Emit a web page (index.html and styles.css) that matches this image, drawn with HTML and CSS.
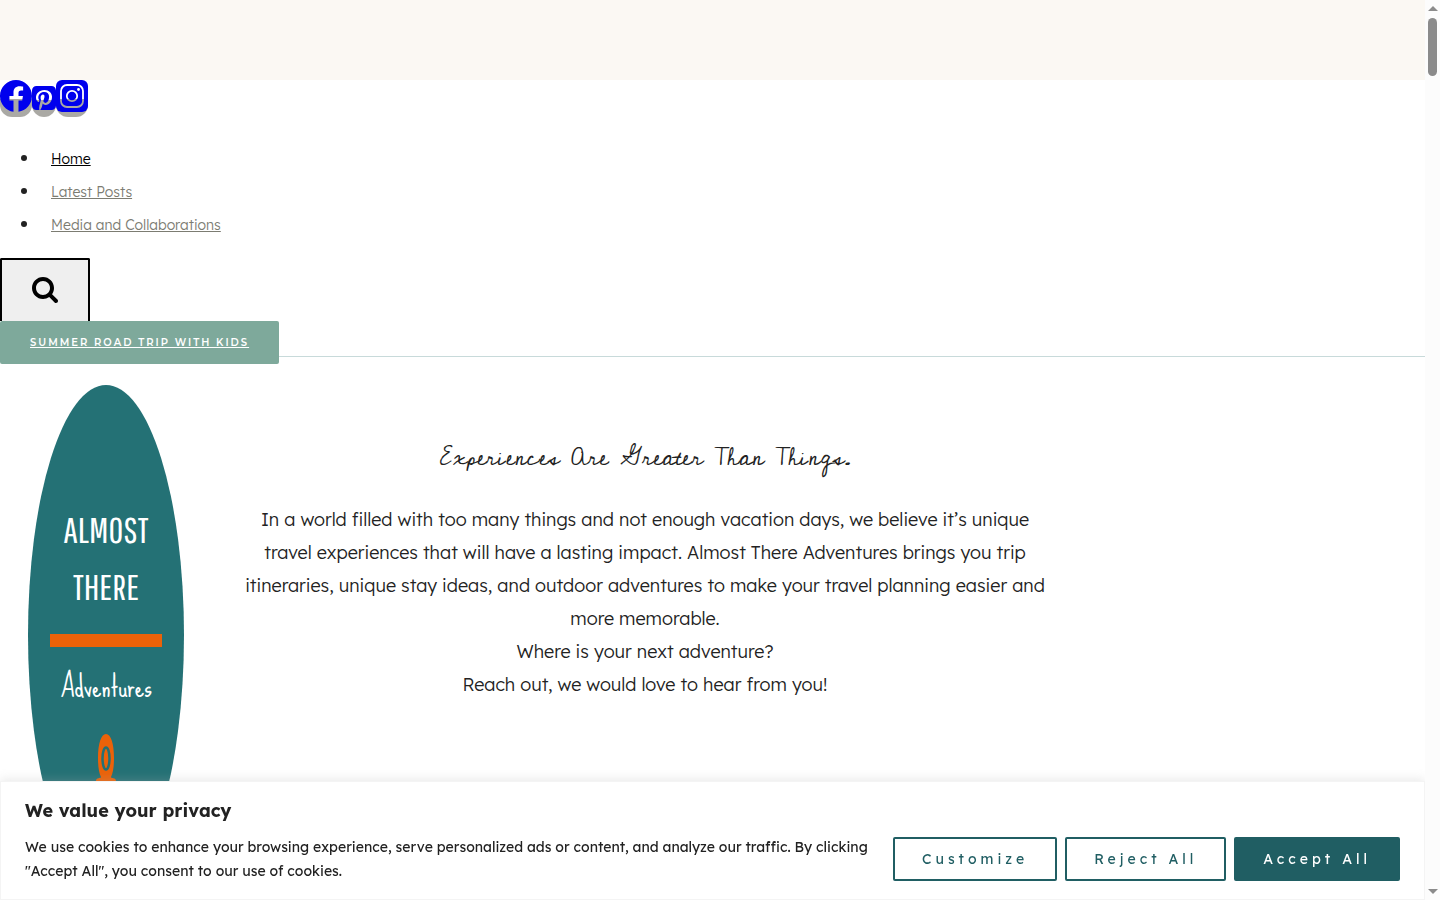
FILE: index.html
```html
<!DOCTYPE html>
<html lang="en">
<head>
    <meta charset="UTF-8">
    <meta name="viewport" content="width=device-width, initial-scale=1.0">
    <title>Almost There Adventures</title>
    <link rel="stylesheet" href="styles.css">
</head>
<body>
    <div class="page">
        <div class="top-band"></div>

        <header class="site-header">
            <div class="social">
                <a href="#" aria-label="Facebook">
                    <svg width="32" height="32" viewBox="0 0 32 32"><path d="M31.997 15.999c0-8.836-7.163-15.999-15.999-15.999s-15.999 7.163-15.999 15.999c0 7.985 5.851 14.604 13.499 15.804v-11.18h-4.062v-4.625h4.062v-3.525c0-4.010 2.389-6.225 6.043-6.225 1.75 0 3.581 0.313 3.581 0.313v3.937h-2.017c-1.987 0-2.607 1.233-2.607 2.498v3.001h4.437l-0.709 4.625h-3.728v11.18c7.649-1.2 13.499-7.819 13.499-15.804z"/></svg>
                </a>
                <a href="#" aria-label="Pinterest">
                    <svg width="24" height="28" viewBox="0 0 24 28"><path d="M19.5 2c2.484 0 4.5 2.016 4.5 4.5v15c0 2.484-2.016 4.5-4.5 4.5h-11.328c0.516-0.734 1.359-2 1.687-3.281 0 0 0.141-0.531 0.828-3.266 0.422 0.797 1.625 1.484 2.906 1.484 3.813 0 6.406-3.484 6.406-8.141 0-3.516-2.984-6.797-7.516-6.797-5.641 0-8.484 4.047-8.484 7.422 0 2.031 0.781 3.844 2.438 4.531 0.266 0.109 0.516 0 0.594-0.297 0.047-0.203 0.172-0.734 0.234-0.953 0.078-0.297 0.047-0.406-0.172-0.656-0.469-0.578-0.781-1.297-0.781-2.344 0-3 2.25-5.672 5.844-5.672 3.187 0 4.937 1.937 4.937 4.547 0 3.422-1.516 6.312-3.766 6.312-1.234 0-2.172-1.031-1.875-2.297 0.359-1.5 1.047-3.125 1.047-4.203 0-0.969-0.516-1.781-1.594-1.781-1.266 0-2.281 1.313-2.281 3.063 0 0 0 1.125 0.375 1.891-1.297 5.5-1.531 6.469-1.531 6.469-0.344 1.437-0.203 3.109-0.109 3.969h-2.859c-2.484 0-4.5-2.016-4.5-4.5v-15c0-2.484 2.016-4.5 4.5-4.5h15z"/></svg>
                </a>
                <a href="#" aria-label="Instagram">
                    <svg width="32" height="32" viewBox="0 0 32 32">
                        <mask id="insta">
                            <rect width="32" height="32" rx="6" fill="#fff"/>
                            <rect x="5" y="5" width="22" height="22" rx="6" fill="none" stroke="#000" stroke-width="1.800"/>
                            <circle cx="16" cy="16" r="5.200" fill="none" stroke="#000" stroke-width="1.800"/>
                            <circle cx="22.500" cy="9.500" r="1.400" fill="#000"/>
                        </mask>
                        <rect width="32" height="32" mask="url(#insta)"/>
                    </svg>
                </a>
            </div>

            <nav>
                <ul class="menu">
                    <li><a class="current" href="#">Home</a></li>
                    <li><a href="#">Latest Posts</a></li>
                    <li><a href="#">Media and Collaborations</a></li>
                </ul>
            </nav>

            <button class="search-toggle" aria-label="Search">
                <svg width="26" height="28" viewBox="0 0 26 28"><path d="M18 13c0-3.859-3.141-7-7-7s-7 3.141-7 7 3.141 7 7 7 7-3.141 7-7zM26 26c0 1.094-0.906 2-2 2-0.531 0-1.047-0.219-1.406-0.594l-5.359-5.344c-1.828 1.266-4.016 1.937-6.234 1.937-6.078 0-11-4.922-11-11s4.922-11 11-11 11 4.922 11 11c0 2.219-0.672 4.406-1.937 6.234l5.359 5.359c0.359 0.359 0.578 0.875 0.578 1.406z"/></svg>
            </button>
            <div class="cta-row">
                <a class="cta" href="#">SUMMER ROAD TRIP WITH KIDS</a>
            </div>
        </header>

        <main class="intro">
            <svg class="logo" width="212" height="500" viewBox="0 0 212 500" role="img" aria-label="Almost There Adventures">
                <ellipse cx="106" cy="250" rx="78" ry="250" fill="#247175"/>
                <g fill="#fff" text-anchor="middle">
                    <text class="logo-caps" x="106" y="158">ALMOST</text>
                    <text class="logo-caps" x="106" y="215">THERE</text>
                    <text class="logo-script" x="106" y="312">Adventures</text>
                </g>
                <rect x="50" y="249" width="112" height="13" fill="#eb6209"/>
                <path d="M106 349c-5 0-8 10-8 24 0 9 1 15 3 19 0 2-5 0-5 4v28h20v-28c0-4-5-2-5-4 2-4 3-10 3-19 0-14-3-24-8-24z" fill="#eb6209"/>
                <ellipse cx="106" cy="373.500" rx="3.500" ry="11" fill="#eb6209" stroke="#247175" stroke-width="2.500"/>
            </svg>

            <div class="intro-text">
                <h2>Experiences Are Greater Than Things.</h2>
                <p>In a world filled with too many things and not enough vacation days, we believe it’s unique travel experiences that will have a lasting impact. Almost There Adventures brings you trip itineraries, unique stay ideas, and outdoor adventures to make your travel planning easier and more memorable.<br>Where is your next adventure?<br>Reach out, we would love to hear from you!</p>
            </div>
        </main>
    </div>

    <section class="consent">
        <h3>We value your privacy</h3>
        <div class="consent-body">
            <p>We use cookies to enhance your browsing experience, serve personalized ads or content, and analyze our traffic. By clicking "Accept All", you consent to our use of cookies.</p>
            <div class="consent-buttons">
                <button>Customize</button>
                <button>Reject All</button>
                <button class="accept">Accept All</button>
            </div>
        </div>
    </section>

    <div class="scrollbar" aria-hidden="true">
        <span class="arrow-up"></span>
        <span class="thumb"></span>
        <span class="arrow-down"></span>
    </div>
</body>
</html>
```
FILE: styles.css
```css
:root {
    --teal: #205e63;
    --text: #222;
    --scrollbar: 15px;
}

* {
    box-sizing: border-box;
    margin: 0;
    padding: 0;
}

body {
    height: 100vh;
    overflow: hidden;
    background: #fff;
    color: var(--text);
    font-family: Lexend, Inter, sans-serif;
    font-size: 18px;
    font-weight: 300;
}

.page {
    margin-right: var(--scrollbar);
}

.top-band {
    height: 80px;
    background: #fbf8f3;
}

/* the call-to-action hangs over the bottom border */
.site-header {
    height: 277px;
    border-bottom: 1px solid #c8dada;
}

.social {
    display: flex;
    align-items: flex-end;
    height: 37px;
}

.social a {
    display: flex;
    padding-bottom: 5px;
    border-radius: 0 0 12px 12px;
    background: linear-gradient(transparent 50%, #aaa9a4 50%);
}

.social svg {
    fill: #00e;
}

.menu {
    padding: 24px 0 18px 40px;
    line-height: 33px;
}

.menu a {
    margin-left: 11px;
    color: #7c7c72;
    font-size: 14px;
    line-height: 16px;
}

.menu a.current {
    color: #000;
}

.search-toggle {
    display: flex;
    justify-content: center;
    width: 90px;
    height: 63px;
    padding-top: 15px;
    border: 2px solid #000;
    border-bottom: 0;
    border-radius: 2px 2px 0 0;
    background: #efefef;
}

.cta {
    display: inline-block;
    padding: 0 30px;
    border-radius: 2px;
    background: #7ea99b;
    color: #fff;
    font-family: Montserrat, Inter, sans-serif;
    font-size: 10px;
    font-weight: 600;
    letter-spacing: 2px;
    line-height: 43px;
}

.intro {
    display: flex;
    padding-top: 28px;
}

.logo {
    flex: none;
}

.logo-caps {
    font: 36px "Pathway Gothic One", "Roboto Condensed", sans-serif;
}

.logo-script {
    font: 30px "Sue Ellen Francisco", "Liberation Serif", cursive;
}

.intro-text {
    max-width: 866px;
    padding: 52px 30px;
    text-align: center;
}

.intro-text h2 {
    margin-bottom: 24px;
    font: 400 25px/42px "Homemade Apple", "Cedarville Cursive", "Liberation Serif", cursive;
}

.intro-text p {
    line-height: 33px;
}

.consent {
    position: fixed;
    right: var(--scrollbar);
    bottom: 0;
    left: 0;
    padding: 16px 24px;
    border: 1px solid #f4f4f4;
    background: #fff;
    box-shadow: 0 -1px 10px rgba(172, 171, 171, 0.3);
}

.consent h3 {
    margin-bottom: 12px;
    font-size: 18px;
    font-weight: 700;
    line-height: 25px;
}

.consent-body {
    display: flex;
    align-items: center;
    gap: 24px;
}

.consent-body p {
    flex: 1;
    font-size: 14px;
    font-weight: 400;
    line-height: 24px;
}

.consent-buttons {
    display: flex;
    gap: 8px;
}

.consent-buttons button {
    height: 44px;
    padding: 0 27px;
    border: 2px solid var(--teal);
    border-radius: 2px;
    background: #fff;
    color: var(--teal);
    font: 400 14px Lexend, Inter, sans-serif;
    letter-spacing: 4px;
}

.consent-buttons .accept {
    background: var(--teal);
    color: #fff;
}

.scrollbar {
    position: fixed;
    top: 0;
    right: 0;
    bottom: 0;
    display: flex;
    flex-direction: column;
    align-items: center;
    width: var(--scrollbar);
    padding: 6px 0;
    background: #fcfcfc;
}

.thumb {
    width: 9px;
    height: 58px;
    margin: 7px 0 auto;
    border-radius: 5px;
    background: #8b8b8b;
}

.arrow-up,
.arrow-down {
    border: 5px solid transparent;
}

.arrow-up {
    border-top: 0;
    border-bottom-color: #8b8b8b;
}

.arrow-down {
    border-bottom: 0;
    border-top-color: #8b8b8b;
}
```
